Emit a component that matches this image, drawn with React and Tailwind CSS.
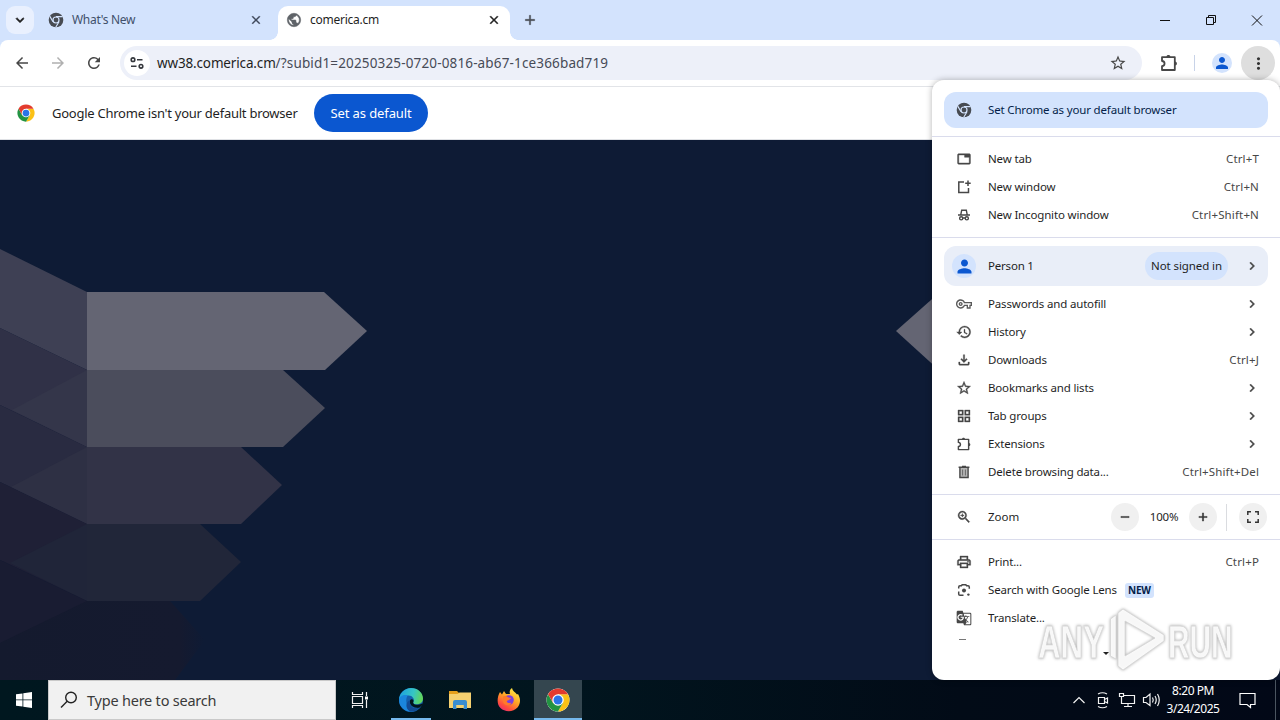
import React from "react";
import {
  MdPublic, MdArrowBack, MdArrowForward, MdRefresh, MdStarOutline, MdPerson, MdMoreVert, MdTab, MdHistory,
  MdOutlineFileDownload, MdGridView, MdZoomIn, MdOutlinePrint, MdGTranslate, MdOutlineVpnKey, MdChevronRight,
  MdRemove, MdAdd, MdClose, MdExpandMore,
} from "react-icons/md";

const ChromeMono = ({ className, bg = "#d3e3fd" }) => (
  <svg className={className} viewBox="0 0 24 24">
    <circle cx="12" cy="12" r="11" fill="#474b52" />
    <circle cx="12" cy="12" r="5.4" fill={bg} />
    <circle cx="12" cy="12" r="3.6" fill="#474b52" />
    <g fill="none" stroke={bg} strokeWidth="1.7">
      <path d="M12 6.9H22M7.5 14.5L2.6 6.2M16.5 14.5L11.6 23" />
    </g>
  </svg>
);

const ChromeColor = ({ className }) => (
  <svg className={className} viewBox="0 0 48 48">
    <circle cx="24" cy="24" r="23" fill="#fff" />
    <path d="M24 12.5H43.9A23 23 0 0 1 24 47L34 29.7z" fill="#fbc116" />
    <path d="M4.1 12.5A23 23 0 0 0 24 47L34 29.7L14 29.7z" fill="#229342" />
    <path d="M24 24V12.5H43.9A23 23 0 0 0 4.1 12.5L14 29.7z" fill="#e33b2e" />
    <circle cx="24" cy="24" r="11.5" fill="#fff" />
    <circle cx="24" cy="24" r="9" fill="#2a74e8" />
  </svg>
);

const Puzzle = ({ className }) => (
  <svg className={className} viewBox="0 0 20 20" fill="none" stroke="#474747" strokeWidth="1.8" strokeLinejoin="round">
    <path d="M3 4.2H15.8V17H3V13.2C6.4 12.8 6.4 8.4 3 8z" />
    <path d="M7.4 4C7.4 1.4 11.4 1.4 11.4 4zM16 8.6c2.6 0 2.6 4 0 4z" fill="#474747" stroke="none" />
  </svg>
);

const NewWindow = ({ className }) => (
  <svg className={className} viewBox="0 0 16 16" fill="none" stroke="#474747" strokeWidth="1.5">
    <path d="M8 3H2.8V13.600H12.500V9M12 1.500v5.500M9.200 4.200h5.500" />
  </svg>
);

const Incognito = ({ className }) => (
  <svg className={className} viewBox="0 0 16 16" fill="none" stroke="#474747" strokeWidth="1.4">
    <path d="M2 8H14M4.800 7.600L5.700 3.200H10.300L11.200 7.600" />
    <circle cx="5.2" cy="11.3" r="1.6" />
    <circle cx="10.8" cy="11.3" r="1.6" />
    <path d="M6.8 11h2.4" />
  </svg>
);

const Trash = ({ className }) => (
  <svg className={className} viewBox="0 0 16 16" fill="none" stroke="#474747" strokeWidth="1.4">
    <path d="M3.9 4V13.500H12.100V4" fill="#b5b5b5" />
    <path d="M2.6 3.200H13.400M6 2.400h4" />
    <path d="M6.600 5.500v6M9.400 5.500v6" strokeWidth="0.7" />
  </svg>
);

const Lens = ({ className }) => (
  <svg className={className} viewBox="0 0 16 16" fill="none" stroke="#474747" strokeWidth="1.5">
    <path d="M2.7 6.500V5.200Q2.700 3.800 4 3.800H5.400L6.200 2.700H9.800L10.600 3.800H12Q13.300 3.800 13.300 5.200V6.800M2.700 9.500V12Q2.700 13.300 4 13.300H7.500" />
    <circle cx="8" cy="8.5" r="2" fill="#474747" stroke="none" />
    <circle cx="12.4" cy="12.6" r="1.2" fill="#474747" stroke="none" />
  </svg>
);

const Tune = () => (
  <svg className="h-4 w-4" viewBox="0 0 16 16" fill="none" stroke="#34373c" strokeWidth="1.6">
    <circle cx="4" cy="4.7" r="1.8" />
    <path d="M8 4.7h5.500M2 11.3H7.500" />
    <circle cx="12" cy="11.3" r="1.8" />
  </svg>
);

const ic = "h-4 w-4 text-[#474747] [stroke-width:0.5]";
const drawn = "h-4 w-4";
const arrowCls = "-mr-px h-4 w-4 text-[#474747] [stroke-width:0.6]";
const labelCls = "whitespace-nowrap text-[11.5px] tracking-[-0.16px]";

const Row = ({ icon, label, keys, arrow, badge }) => (
  <div className="flex h-7 shrink-0 items-center pl-6 pr-[21px]">
    <span className="flex w-8 items-center">{icon}</span>
    <span className={labelCls}>{label}</span>
    {badge && (
      <span className="ml-2 flex h-[15px] w-[29px] items-center justify-center rounded-[3px] bg-[#d3e3fd] text-[10px] font-bold tracking-[-0.2px] text-[#041e49]">
        {badge}
      </span>
    )}
    <span className="ml-auto whitespace-nowrap text-[11.5px] tracking-[0.15px] text-[#474747]">{keys}</span>
    {arrow && <MdChevronRight className={arrowCls} />}
  </div>
);

const Sep = ({ className = "" }) => <div className={`h-px shrink-0 bg-[#dadcec] ${className}`} />;

const Menu = () => (
  <div className="absolute left-[932px] top-20 flex h-[600px] w-[348px] flex-col overflow-hidden rounded-xl bg-white pt-3 text-[11.5px] text-[#1f1f1f] shadow-[0_0_6px_rgba(0,0,0,0.3)]">
    <div className="mx-3 flex h-9 shrink-0 items-center rounded-xl bg-[#d3e3fd] pl-3 text-[#041e49]">
      <span className="flex w-8"><ChromeMono className="h-4 w-4" /></span>
      <span className={labelCls}>Set Chrome as your default browser</span>
    </div>
    <Sep className="mb-2 mt-2" />
    <Row icon={<MdTab className="ml-px h-3.5 w-3.5 text-[#474747] [stroke-width:0.8]" />} label="New tab" keys="Ctrl+T" />
    <Row icon={<NewWindow className={drawn} />} label="New window" keys="Ctrl+N" />
    <Row icon={<Incognito className={drawn} />} label="New Incognito window" keys="Ctrl+Shift+N" />
    <Sep className="my-2" />
    <div className="mx-3 mb-1 flex h-10 shrink-0 items-center rounded-xl bg-[#e9eef8] pl-2 pr-2">
      <span className="mr-3 flex h-6 w-6 items-center justify-center rounded-full bg-[#d3e3fd]">
        <MdPerson className="h-[21px] w-[21px] text-[#0b57d0]" />
      </span>
      <span className="tracking-[-0.2px]">Person 1</span>
      <span className="ml-auto flex h-7 w-[83px] items-center justify-center whitespace-nowrap rounded-full bg-[#d3e3fd] tracking-[-0.1px]">Not signed in</span>
      <MdChevronRight className="ml-4 h-4 w-4 text-[#474747] [stroke-width:0.6]" />
    </div>
    <Row icon={<MdOutlineVpnKey className="h-4 w-4 text-[#5a5a5a]" />} label="Passwords and autofill" arrow />
    <Row icon={<MdHistory className={ic} />} label="History" arrow />
    <Row icon={<MdOutlineFileDownload className={ic} />} label="Downloads" keys="Ctrl+J" />
    <Row icon={<MdStarOutline className={ic} />} label="Bookmarks and lists" arrow />
    <Row icon={<MdGridView className={ic} />} label="Tab groups" arrow />
    <Row icon={<Puzzle className={drawn} />} label="Extensions" arrow />
    <Row icon={<Trash className={drawn} />} label="Delete browsing data..." keys="Ctrl+Shift+Del" />
    <Sep className="mt-2" />
    <div className="flex h-11 shrink-0 items-center pl-6 pr-[13px]">
      <span className="flex w-8"><MdZoomIn className={ic} /></span>
      <span>Zoom</span>
      <span className="ml-auto flex h-7 w-7 items-center justify-center rounded-full bg-[#f0f0f0]"><MdRemove className="h-3.5 w-3.5 [stroke-width:0.6]" /></span>
      <span className="w-[50px] text-center tracking-[-0.2px]">100%</span>
      <span className="flex h-7 w-7 items-center justify-center rounded-full bg-[#f0f0f0]"><MdAdd className="h-3.5 w-3.5 [stroke-width:0.6]" /></span>
      <span className="ml-[9px] mr-3 h-[27px] w-px bg-[#dadce0]" />
      <span className="flex h-7 w-7 items-center justify-center rounded-full bg-[#f0f0f0]">
        <svg width="12" height="12" fill="none" stroke="#333" strokeWidth="1.5"><path d="M0.8 4V0.800H4M8 0.800H11.200V4M11.200 8V11.200H8M4 11.200H0.800V8" /></svg>
      </span>
    </div>
    <Sep className="mb-2" />
    <Row icon={<MdOutlinePrint className={ic} />} label="Print..." keys="Ctrl+P" />
    <Row icon={<Lens className={drawn} />} label="Search with Google Lens" badge="NEW" />
    <Row icon={<MdGTranslate className="h-4 w-4 text-[#474747]" />} label="Translate..." />
    <div className="ml-[27px] mt-[7px] h-px w-[7px] shrink-0 bg-[#777]" />
    <div className="mx-auto mt-[12px] h-0 w-0 shrink-0 border-x-[3px] border-t-[3px] border-x-transparent border-t-[#222]" />
  </div>
);

const Watermark = () => (
  <svg className="pointer-events-none absolute left-[1020px] top-[596px] drop-shadow-[0_0_1.5px_rgba(0,0,0,0.35)]" width="240" height="84" viewBox="-12 -8 240 84">
    <g fill="#fff" fillOpacity="0.9" stroke="#d6d6d6" strokeWidth="0.8" fontFamily="Liberation Sans" fontWeight="bold" fontSize="47">
      <text transform="translate(6 54) scale(0.665 1)">ANY</text>
      <text transform="translate(136 54) scale(0.635 1)">RUN</text>
      <path fillRule="evenodd" d="M78.500 15L84 11V55L78.500 52zM86 9L91 5L132 31V37L91 66L86 62zM93 17V52L123 34z" />
    </g>
  </svg>
);

const Backdrop = () => (
  <svg className="block h-[540px] w-full bg-[#0e1b35]" viewBox="0 140 1280 540">
    <defs>
      <linearGradient id="fade" x1="0" x2="1">
        <stop offset="0" stopColor="#141a2e" />
        <stop offset="0.88" stopColor="#151a2f" />
        <stop offset="1" stopColor="#0e1b35" />
      </linearGradient>
    </defs>
    <path d="M0 601H170L205 640L175 680H0z" fill="url(#fade)" />
    <path d="M0 249L87 292V370L0 328z" fill="#3e4054" />
    <path d="M0 328L87 370V447L0 405z" fill="#303147" />
    <path d="M12 410L87 370V447z" fill="#34364a" />
    <path d="M0 405L87 447V524L0 482z" fill="#292b41" />
    <path d="M11 487L87 447V524z" fill="#2e3044" />
    <path d="M0 482L87 524V601L0 560z" fill="#1f2036" />
    <path d="M10 563L87 524V601z" fill="#202539" />
    <path d="M0 560L87 601L0 643z" fill="#191c32" />
    <path d="M87 292H324L367 331L325 370H87z" fill="#646573" />
    <path d="M87 370H283L325 408L283 447H87z" fill="#4b4d5c" />
    <path d="M87 447H241L282 485L241 524H87z" fill="#323347" />
    <path d="M87 524H200L241 562L200 601H87z" fill="#212639" />
    <path d="M940 292L896 331L940 371z" fill="#646573" />
  </svg>
);

const TabStrip = () => (
  <div className="flex h-10 bg-[#d3e3fd] pl-[6px]">
    <div className="mt-[6px] flex h-7 w-7 items-center justify-center rounded-[9px] bg-[#e9f0fe]">
      <MdExpandMore className="h-4 w-4 text-[#1f1f1f] [stroke-width:1]" />
    </div>
    <div className="flex w-[244px] items-center pl-[14px] text-[12px] text-[#41506b]">
      <ChromeMono className="h-4 w-4" />
      <span className="ml-2 tracking-[-0.3px]">What's New</span>
      <MdClose className="ml-auto mr-[15px] h-[14px] w-[14px] text-[#3c4658] [stroke-width:0.6]" />
    </div>
    <div className="relative mt-[6px] flex w-[232px] items-center rounded-t-[10px] bg-white pb-[6px] pl-2 text-[12px] text-[#1f1f1f]">
      <span className="absolute -left-2 bottom-0 h-2 w-2 bg-[radial-gradient(circle_at_0_0,#d3e3fd_7.5px,#fff_8px)]" />
      <span className="absolute -right-2 bottom-0 h-2 w-2 bg-[radial-gradient(circle_at_100%_0,#d3e3fd_7.5px,#fff_8px)]" />
      <MdPublic className="h-4 w-4 text-[#5f6368] [stroke-width:0.8]" />
      <span className="ml-2 tracking-[-0.25px]">comerica.cm</span>
      <MdClose className="ml-auto mr-[9px] h-[14px] w-[14px] text-[#1f1f1f] [stroke-width:0.8]" />
    </div>
    <MdAdd className="ml-3 mt-3 h-4 w-4 text-[#474b52] [stroke-width:0.6]" />
    <svg className="ml-auto mr-[17px] mt-[14px]" width="104" height="13" fill="none" stroke="#111" strokeWidth="1">
      <path d="M1 6.5H11M47.5 3.5h7v7h-7zM49.5 3V1.5h7v7H55M93 1.5l10 10M103 1.5l-10 10" />
    </svg>
  </div>
);

const Toolbar = () => (
  <div className="bg-[#d3e3fd]">
    <div className="flex h-[47px] items-center rounded-t-lg border-b border-[#e2e4e8] bg-white pl-[13px] pr-[5px]">
      <MdArrowBack className="h-[18px] w-[18px] text-[#474747]" />
      <MdArrowForward className="ml-[18px] h-[18px] w-[18px] text-[#b0b0b0]" />
      <MdRefresh className="ml-[18px] h-[18px] w-[18px] text-[#474747]" />
      <div className="ml-[17px] flex h-[34px] w-[1022px] items-center rounded-full bg-[#edf0f9] pl-1 pr-[15px] text-[13.5px]">
        <span className="flex h-[26px] w-[26px] items-center justify-center rounded-full bg-white"><Tune /></span>
        <span className="ml-[7px] whitespace-nowrap tracking-[0.15px] text-[#474b57]">
          <span className="tracking-[-0.15px] text-[#1f1f1f]">ww38.comerica.cm</span>/?subid1=20250325-0720-0816-ab67-1ce366bad719
        </span>
        <MdStarOutline className="ml-auto h-[18px] w-[18px] text-[#474747]" />
      </div>
      <Puzzle className="ml-[17px] h-5 w-5" />
      <span className="ml-[15px] h-4 w-px bg-[#c8d3e8]" />
      <span className="ml-[17px] flex h-5 w-5 items-center justify-center rounded-full bg-[#d3e3fd]"><MdPerson className="h-[18px] w-[18px] text-[#0b57d0]" /></span>
      <span className="ml-auto flex h-[34px] w-[34px] items-center justify-center rounded-full bg-[#dedede]"><MdMoreVert className="h-[19px] w-[19px] text-[#333]" /></span>
    </div>
  </div>
);

const Infobar = () => (
  <div className="flex h-[53px] items-center border-b border-[#dfe1e5] bg-white pl-[17px] text-[13px] text-[#1f1f1f]">
    <ChromeColor className="h-[18px] w-[18px]" />
    <span className="ml-[17px] w-[262px] whitespace-nowrap pt-px tracking-[-0.25px]">Google Chrome isn't your default browser</span>
    <span className="flex h-[38px] w-[114px] items-center justify-center whitespace-nowrap rounded-full bg-[#0b57d0] pt-px tracking-[-0.1px] text-white">Set as default</span>
  </div>
);

const Edge = () => (
  <svg className="h-6 w-6" viewBox="0 0 24 24">
    <defs>
      <linearGradient id="eg" x1="0" x2="1" y1="0.2" y2="0.4">
        <stop offset="0" stopColor="#1c9fe0" />
        <stop offset="0.6" stopColor="#36c6c4" />
        <stop offset="1" stopColor="#62d65a" />
      </linearGradient>
    </defs>
    <circle cx="12" cy="12" r="12" fill="#1560ac" />
    <path d="M0 12C0 5 6 0 12 0C19 0 24 5 24 10.5C24 15 20 16.5 17 16.3C14.500 16 13.500 15 14.500 13.500C16 11 13 7 9 7.500C5 8 1 9 0 12z" fill="url(#eg)" />
    <path d="M0 12C0.500 8 5 6 9 7.500C6 10 6 20 15.500 23C8 25.500 0 20 0 12z" fill="#1b86dc" />
    <path d="M14.500 13.500C13 16 17 18.500 23 15.500L24 16.500L20 20C14 20 10 17 11 12.500C12 10.500 15 11 14.500 13.500z" fill="#02141c" />
    <path d="M11 12.500C9.500 18 15 22 20.500 19.500C17.500 23 14 24 11 23.500C5.500 20 7 13 11 12.500z" fill="#134b93" />
  </svg>
);

const Folder = () => (
  <svg className="h-6 w-6" viewBox="0 0 24 24">
    <path d="M1 3H9L11 5H22V9H1z" fill="#e59f1c" />
    <path d="M1 6H9.500L11.500 4.500H23V20H1z" fill="#f5d070" />
    <path d="M5 21V14Q5 12 7 12H17Q19 12 19 14V21H15.500V17H8.500V21z" fill="#3a8dd0" />
    <path d="M8.500 17h7v3h-7z" fill="#f5d070" />
  </svg>
);

const Firefox = () => (
  <svg className="h-6 w-6" viewBox="0 0 24 24">
    <defs>
      <linearGradient id="ff" x1="0.8" x2="0.2" y1="0" y2="1">
        <stop offset="0" stopColor="#fff14a" />
        <stop offset="0.45" stopColor="#ffa425" />
        <stop offset="0.8" stopColor="#ff4a3f" />
        <stop offset="1" stopColor="#e62a78" />
      </linearGradient>
    </defs>
    <path d="M3 4L5 6.500L7 3L9 6L13 6C12 3 13.500 1 15 0C15.500 3 18 4 20 6.500L21 6C24 11 23.500 16 20.500 19.500C16.500 24 8 24.500 3.500 20C-0.500 16 0 9 3 4z" fill="url(#ff)" />
    <circle cx="12" cy="12" r="4.800" fill="#7a3fe0" />
    <path d="M6 8.500C8 7.500 10 8 11.500 9.500L14 10C13 12 11 12 10 13C9 14.500 12 16 14.500 14.500C13.500 18 8 18.500 6 14z" fill="#ff7a2a" />
  </svg>
);

const Taskbar = () => (
  <div className="flex h-10 bg-[linear-gradient(90deg,#00171f_0%,#01151e_45%,#020b17_75%,#020817_100%)]">
    <div className="flex w-12 items-center justify-center">
      <svg width="16" height="16" fill="#fff"><path d="M0 2.300L6.500 1.400V7.500H0zM7.300 1.300L16 0V7.500H7.300zM0 8.300H6.500V14.600L0 13.700zM7.300 8.300H16V16L7.300 14.700z" /></svg>
    </div>
    <div className="flex w-72 items-center border border-[#c9c9c9] bg-[#f1f1f1] pl-[11px] text-[14.5px] text-[#3a3a3a]">
      <svg width="18" height="18" fill="none" stroke="#222" strokeWidth="1.400"><circle cx="11" cy="6.500" r="5.300" /><path d="M7.200 10.300L1 16.500" /></svg>
      <span className="ml-[9px] whitespace-nowrap pt-0.5 tracking-[-0.22px]">Type here to search</span>
    </div>
    <div className="flex w-12 items-center justify-center">
      <svg width="18" height="18" fill="none" stroke="#f0f0f0" strokeWidth="1.200"><path d="M1.500 1V3.500H11.500V1M1.500 5.500H11.500V12.500H1.500zM1.500 17V14.500H11.500V17M15.500 1V5M15.500 9V17" /><path d="M14 5.500h3v3h-3z" fill="#fff" stroke="none" /></svg>
    </div>
    <div className="flex w-[54px] flex-col items-center"><span className="flex h-[38px] items-center pt-[2px]"><Edge /></span><span className="h-0.5 w-10 bg-[#76b9ed]" /></div>
    <div className="flex w-11 items-center justify-center"><Folder /></div>
    <div className="flex w-[54px] items-center justify-center"><Firefox /></div>
    <div className="-ml-0.5 flex w-12 flex-col items-center bg-[#34464f]"><span className="flex h-[38px] items-center pt-[2px]"><ChromeColor className="h-6 w-6" /></span><span className="h-0.5 w-full bg-[#76b9ed]" /></div>
    <svg className="ml-auto mt-[11px]" width="90" height="18" fill="none" stroke="#f2f2f2" strokeWidth="1.200">
      <path d="M1.500 12L7 6.500L12.500 12" />
      <path d="M26.500 6.500h6v6h-6zM32.500 8.500L35.500 7V12L32.500 10.500M26 3Q30.500 0.500 35 3M26 15.500Q30.500 18 35 15.500" />
      <path d="M47.500 2.500h4v3h-4zM51.500 4.500H62.500V12.500H49.500V5.500M56 12.500V15.500M52 15.500h8" />
      <path d="M71.500 6.500H74L78 3V14.500L74 11.500H71.500zM80.500 6.500Q82 9 80.500 11.500M83 5Q85.500 9 83 13M85.500 3Q89 9 85.500 15" />
    </svg>
    <div className="-ml-1 mr-1 flex w-[70px] flex-col items-center justify-center whitespace-nowrap text-[12px] leading-[18px] tracking-[-0.45px] text-white">
      <span>8:20 PM</span>
      <span>3/24/2025</span>
    </div>
    <svg className="ml-[7px] mt-[12px]" width="17" height="17" fill="none" stroke="#fff" strokeWidth="1.200"><path d="M1 1.500H16V12.500H11.500V15.500L8 12.500H1z" /></svg>
    <span className="ml-[19px] mr-1 w-px bg-[#4b5560]" />
  </div>
);

export default function App() {
  return (
    <div className="relative h-[720px] w-[1280px] overflow-hidden bg-white font-['Noto_Sans',sans-serif] [&_path[fill=none]]:[stroke-width:0]">
      <TabStrip />
      <Toolbar />
      <Infobar />
      <Backdrop />
      <Taskbar />
      <Menu />
      <Watermark />
    </div>
  );
}
